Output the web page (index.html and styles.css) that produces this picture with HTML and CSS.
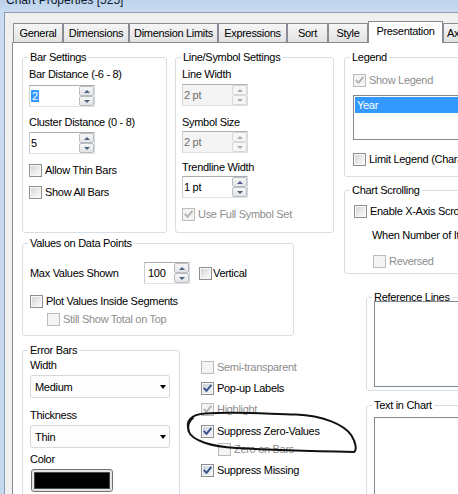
FILE: index.html
```html
<!DOCTYPE html>
<html>
<head>
<meta charset="utf-8">
<title>Chart Properties</title>
<link rel="stylesheet" href="styles.css">
</head>
<body>
<div class="window">
  <div class="titlebar"><span class="title">Chart Properties [525]</span></div>
  <div class="client">
    <div class="tabs">
      <div class="tab t-gen">General</div>
      <div class="tab t-dim">Dimensions</div>
      <div class="tab t-dl">Dimension Limits</div>
      <div class="tab t-exp">Expressions</div>
      <div class="tab t-sort">Sort</div>
      <div class="tab t-style">Style</div>
      <div class="tab sel t-pres">Presentation</div>
      <div class="tab t-ax">Axes</div>
    </div>
    <div class="page">
      <div class="leftcol">
        <div class="toprow">
          <section class="grp g-bar">
            <span class="gtitle">Bar Settings</span>
            <div class="gb pl6">
              <div class="lbl mt4">Bar Distance (-6 - 8)</div>
              <div class="spin mt4"><span class="val"><span class="hl">2</span></span><span class="sbtns"><span class="sb"><i class="up"></i></span><span class="sb"><i class="dn"></i></span></span></div>
              <div class="lbl mt9">Cluster Distance (0 - 8)</div>
              <div class="spin mt3"><span class="val">5</span><span class="sbtns"><span class="sb"><i class="up"></i></span><span class="sb"><i class="dn"></i></span></span></div>
              <div class="cbrow mt10"><span class="cb"></span><span class="cbl">Allow Thin Bars</span></div>
              <div class="cbrow mt9"><span class="cb"></span><span class="cbl">Show All Bars</span></div>
            </div>
          </section>
          <section class="grp g-line">
            <span class="gtitle">Line/Symbol Settings</span>
            <div class="gb pl6">
              <div class="lbl mt4">Line Width</div>
              <div class="spin dis mt3"><span class="val">2 pt</span><span class="sbtns"><span class="sb"><i class="up"></i></span><span class="sb"><i class="dn"></i></span></span></div>
              <div class="lbl mt10">Symbol Size</div>
              <div class="spin dis mt2"><span class="val">2 pt</span><span class="sbtns"><span class="sb"><i class="up"></i></span><span class="sb"><i class="dn"></i></span></span></div>
              <div class="lbl mt8">Trendline Width</div>
              <div class="spin mt2"><span class="val">1 pt</span><span class="sbtns"><span class="sb"><i class="up"></i></span><span class="sb"><i class="dn"></i></span></span></div>
              <div class="cbrow mt10 disabled"><span class="cb dis"><svg viewBox="0 0 11 11" width="11" height="11"><path d="M2.4 5.6 L4.5 7.9 L8.8 2.6"/></svg></span><span class="cbl">Use Full Symbol Set</span></div>
            </div>
          </section>
        </div>
        <section class="grp g-values">
          <span class="gtitle">Values on Data Points</span>
          <div class="gb pl7">
            <div class="vrow mt12">
              <span class="vlabel">Max Values Shown</span>
              <div class="spin w46"><span class="val pl3">100</span><span class="sbtns"><span class="sb"><i class="up"></i></span><span class="sb"><i class="dn"></i></span></span></div>
              <div class="cbrow ml9"><span class="cb"></span><span class="cbl tight">Vertical</span></div>
            </div>
            <div class="cbrow mt11"><span class="cb"></span><span class="cbl">Plot Values Inside Segments</span></div>
            <div class="cbrow mt5 ml17 disabled"><span class="cb dis"></span><span class="cbl">Still Show Total on Top</span></div>
          </div>
        </section>
        <div class="bottomrow">
          <section class="grp g-error">
            <span class="gtitle">Error Bars</span>
            <div class="gb pl7">
              <div class="lbl mt2">Width</div>
              <div class="combo mt3"><span>Medium</span><i class="arr"></i></div>
              <div class="lbl mt11">Thickness</div>
              <div class="combo mt3"><span>Thin</span><i class="arr"></i></div>
              <div class="lbl mt5">Color</div>
              <div class="colorbtn mt3"><div class="swatch"></div></div>
            </div>
          </section>
          <div class="checklist">
            <div class="cbrow disabled"><span class="cb dis"></span><span class="cbl">Semi-transparent</span></div>
            <div class="cbrow mt8"><span class="cb on"><svg viewBox="0 0 11 11" width="11" height="11"><path d="M2.4 5.6 L4.5 7.9 L8.8 2.6"/></svg></span><span class="cbl">Pop-up Labels</span></div>
            <div class="cbrow mt8 disabled"><span class="cb dis"><svg viewBox="0 0 11 11" width="11" height="11"><path d="M2.4 5.6 L4.5 7.9 L8.8 2.6"/></svg></span><span class="cbl">Highlight</span></div>
            <div class="cbrow mt9"><span class="cb on"><svg viewBox="0 0 11 11" width="11" height="11"><path d="M2.4 5.6 L4.5 7.9 L8.8 2.6"/></svg></span><span class="cbl">Suppress Zero-Values</span></div>
            <div class="cbrow mt5 ml17 disabled"><span class="cb dis"></span><span class="cbl">Zero on Bars</span></div>
            <div class="cbrow mt8"><span class="cb on"><svg viewBox="0 0 11 11" width="11" height="11"><path d="M2.4 5.6 L4.5 7.9 L8.8 2.6"/></svg></span><span class="cbl">Suppress Missing</span></div>
          </div>
        </div>
      </div>
      <div class="rightcol">
        <section class="grp g-legend">
          <span class="gtitle">Legend</span>
          <div class="gb pl8">
            <div class="cbrow mt10 disabled"><span class="cb dis"><svg viewBox="0 0 11 11" width="11" height="11"><path d="M2.4 5.6 L4.5 7.9 L8.8 2.6"/></svg></span><span class="cbl">Show Legend</span></div>
            <div class="list l-legend mt8"><div class="item sel">Year</div></div>
            <div class="cbrow mt13"><span class="cb"></span><span class="cbl">Limit Legend (Characters)</span></div>
          </div>
        </section>
        <section class="grp g-scroll">
          <span class="gtitle">Chart Scrolling</span>
          <div class="gb pl9">
            <div class="cbrow mt8"><span class="cb"></span><span class="cbl">Enable X-Axis Scrollbar</span></div>
            <div class="lbl mt11 ml18">When Number of Items Exceeds</div>
            <div class="cbrow mt13 ml19 disabled"><span class="cb dis"></span><span class="cbl">Reversed</span></div>
          </div>
        </section>
        <section class="grp g-ref">
          <span class="gtitle">Reference Lines</span>
          <div class="gb pl7">
            <div class="list l-ref"></div>
          </div>
        </section>
        <section class="grp g-text">
          <span class="gtitle">Text in Chart</span>
          <div class="gb pl7">
            <div class="list l-text mt5"></div>
          </div>
        </section>
      </div>
    </div>
  </div>
  <svg class="scribble" width="458" height="494" viewBox="0 0 458 494">
    <path d="M189 431 C185 421 191 414.5 205 413.5 C238 411.5 268 414 296 414.5 C322 415.5 344 424 351.5 435.5 C356 443 357 450 354 452 C330 451.5 272 450 236 448 C212 446.5 192 441 188.5 431 C187.5 426 189 421 193 418"/>
  </svg>
</div>
</body>
</html>
```
FILE: styles.css
```css
html, body {
  margin: 0;
  padding: 0;
}
body {
  width: 458px;
  height: 494px;
  overflow: hidden;
  font-family: "Liberation Sans", Arial, sans-serif;
  font-size: 11px;
  letter-spacing: -0.3px;
  color: #000;
  white-space: nowrap;
}
.window {
  position: relative;
  width: 458px;
  height: 494px;
  overflow: hidden;
  background: linear-gradient(#bcd2ec 0, #c9dcf1 12px, #c4d8ee 100%);
}
.titlebar {
  height: 12px;
  overflow: hidden;
  padding-left: 6px;
}
.title {
  display: block;
  font-size: 12px;
  line-height: 20px;
  margin-top: -10px;
  letter-spacing: 0;
  color: #0c1a2b;
}
.client {
  margin-left: 4px;
  border-left: 1px solid #8e9db1;
  border-top: 1px solid #8e9db1;
  background: #f0f0f0;
  height: 482px;
  box-sizing: border-box;
  padding-top: 8px;
}

/* tabs */
.tabs {
  display: flex;
  align-items: flex-start;
  height: 21px;
  padding-left: 8px;
}
.tab {
  box-sizing: border-box;
  flex: none;
  height: 19px;
  margin-top: 2px;
  border: 1px solid #898c95;
  border-bottom: none;
  padding-top: 1px;
  line-height: 17px;
  text-align: center;
  overflow: hidden;
  background: linear-gradient(#f6f6f6, #ececec 50%, #e2e2e2);
}
.tab.sel {
  position: relative;
  z-index: 2;
  height: 22px;
  margin-top: 0;
  background: #fff;
}
.t-gen { width: 50px; }
.t-dim { width: 66px; }
.t-dl { width: 89px; }
.t-exp { width: 69px; }
.t-sort { width: 41px; }
.t-style { width: 40px; }
.t-pres { width: 75px; }
.t-ax { width: 60px; text-align: left; padding-left: 3px; }

/* page */
.page {
  display: flex;
  margin-left: 7px;
  border-top: 1px solid #898c95;
  border-left: 1px solid #898c95;
  background: #fff;
  padding: 14px 0 0 9px;
  height: 460px;
  width: 620px;
}
.leftcol {
  display: flex;
  flex-direction: column;
  width: 312px;
  flex: none;
}
.toprow {
  display: flex;
  gap: 8px;
}
.bottomrow {
  display: flex;
  margin-top: 14px;
}
.rightcol {
  display: flex;
  flex-direction: column;
  margin-left: 10px;
  width: 200px;
  flex: none;
}

/* group boxes */
.grp {
  display: block;
  box-sizing: border-box;
  flex: none;
  border: 1px solid #d5dfe5;
  border-radius: 3px;
}
.gtitle {
  display: block;
  width: fit-content;
  margin: -8px 0 0 5px;
  padding: 0 2px;
  line-height: 14px;
  height: 14px;
  background: #fff;
}
.g-bar { width: 145px; height: 176px; }
.g-line { width: 159px; height: 176px; }
.g-values { width: 272px; height: 93px; margin-top: 10px; }
.g-error { width: 158px; height: 200px; }
.g-legend { width: 200px; height: 120px; }
.g-scroll { width: 200px; height: 84px; margin-top: 13px; }
.g-ref { width: 178px; height: 94px; margin-top: 23px; margin-left: 22px; }
.g-text { width: 178px; height: 200px; margin-top: 14px; margin-left: 22px; }

.gb { display: flex; flex-direction: column; align-items: flex-start; }
.pl6 { padding-left: 6px; }
.pl7 { padding-left: 7px; }
.pl8 { padding-left: 8px; }
.pl9 { padding-left: 9px; }

.mt2 { margin-top: 2px; }
.mt3 { margin-top: 3px; }
.mt4 { margin-top: 4px; }
.mt5 { margin-top: 5px; }
.mt8 { margin-top: 8px; }
.mt9 { margin-top: 9px; }
.mt10 { margin-top: 10px; }
.mt11 { margin-top: 11px; }
.mt12 { margin-top: 12px; }
.mt13 { margin-top: 13px; }
.ml9 { margin-left: 9px; }
.ml17 { margin-left: 17px; }
.ml18 { margin-left: 18px; }
.ml19 { margin-left: 19px; }

.lbl {
  line-height: 13px;
  height: 13px;
}

/* spin boxes */
.spin {
  display: flex;
  align-items: center;
  box-sizing: border-box;
  width: 66px;
  height: 22px;
  border: 1px solid;
  border-color: #abadb3 #d5d9df #dfe3e8 #c9ccd2;
  background: #fff;
}
.spin.w46 { width: 46px; }
.val {
  flex: 1;
  padding-left: 1px;
  line-height: 14px;
}
.val.pl3 { padding-left: 3px; }
.hl {
  background: #3399ff;
  color: #fff;
  padding: 0 1px;
}
.sbtns {
  display: flex;
  flex-direction: column;
  align-self: stretch;
  width: 15px;
  flex: none;
}
.sb {
  display: flex;
  align-items: center;
  justify-content: center;
  box-sizing: border-box;
  height: 10px;
  border: 1px solid #b9bcc1;
  border-radius: 2px;
  background: linear-gradient(#f7f7f7, #e3e4e6);
}
.sb i {
  display: block;
  width: 0;
  height: 0;
  border-left: 3.5px solid transparent;
  border-right: 3.5px solid transparent;
}
.sb .up { border-bottom: 3px solid #4d6185; }
.sb .dn { border-top: 3px solid #4d6185; }
.spin.dis {
  background: #f4f4f4;
  border-color: #adb2b5 #d9dcdf #dfe2e4 #d0d3d6;
  color: #6d6d6d;
}
.spin.dis .sb {
  border-color: #d6d8da;
  background: #f6f6f6;
}
.spin.dis .sb .up { border-bottom-color: #a9acb0; }
.spin.dis .sb .dn { border-top-color: #a9acb0; }

/* check boxes */
.cbrow {
  display: flex;
  align-items: center;
  height: 13px;
  line-height: 13px;
}
.cbl { margin-left: 3px; }
.cbl.tight { margin-left: 1px; }
.disabled .cbl { color: #8d8d8d; }
.cb {
  display: block;
  flex: none;
  box-sizing: border-box;
  width: 13px;
  height: 13px;
  border: 1px solid #8e8f8f;
  background: linear-gradient(135deg, #cfd1d4 0%, #eceded 60%, #fbfbfb 100%);
  box-shadow: inset 0 0 0 1px #f7f7f7;
}
.cb.on {
  background: linear-gradient(135deg, #c8cdd6 0%, #e6e9ee 60%, #f7f8fa 100%);
}
.cb.dis {
  border-color: #bcbcbc;
  background: #f4f4f4;
  box-shadow: none;
}
.cb svg {
  display: block;
}
.cb svg path {
  fill: none;
  stroke: #34508a;
  stroke-width: 1.9;
  stroke-linecap: square;
}
.cb.dis svg path {
  stroke: #b3b3b3;
}

/* values row */
.vrow {
  display: flex;
  align-items: center;
  height: 22px;
}
.vlabel {
  width: 114px;
  flex: none;
}

/* combos */
.combo {
  display: flex;
  align-items: center;
  justify-content: space-between;
  box-sizing: border-box;
  width: 140px;
  height: 23px;
  border: 1px solid #d9d9d9;
  border-radius: 2px;
  background: #fdfdfd;
  padding: 0 3px 0 4px;
}
.arr {
  display: block;
  width: 0;
  height: 0;
  border-left: 3.5px solid transparent;
  border-right: 3.5px solid transparent;
  border-top: 4px solid #000;
}
.colorbtn {
  box-sizing: border-box;
  width: 82px;
  height: 23px;
  margin-left: 1px;
  border: 1px solid #707070;
  border-radius: 3px;
  padding: 2px;
  background: #e4e4e4;
}
.swatch {
  box-sizing: border-box;
  height: 100%;
  background: #000;
  border: 1px solid #4a4a4a;
}

.checklist {
  display: flex;
  flex-direction: column;
  align-items: flex-start;
  margin-left: 21px;
  padding-top: 11px;
}

/* list boxes */
.list {
  box-sizing: border-box;
  border: 1px solid #828790;
  background: #fff;
  width: 200px;
}
.l-legend { height: 45px; }
.l-ref { height: 86px; margin-top: -3px; }
.l-text { height: 80px; }
.item.sel {
  height: 16px;
  line-height: 16px;
  margin: 1px 0 0 1px;
  padding-left: 2px;
  background: #3399ff;
  color: #fff;
}

/* hand-drawn mark */
.scribble {
  position: absolute;
  left: 0;
  top: 0;
  pointer-events: none;
}
.scribble path {
  fill: none;
  stroke: #111;
  stroke-width: 2;
  stroke-linecap: round;
}
```
